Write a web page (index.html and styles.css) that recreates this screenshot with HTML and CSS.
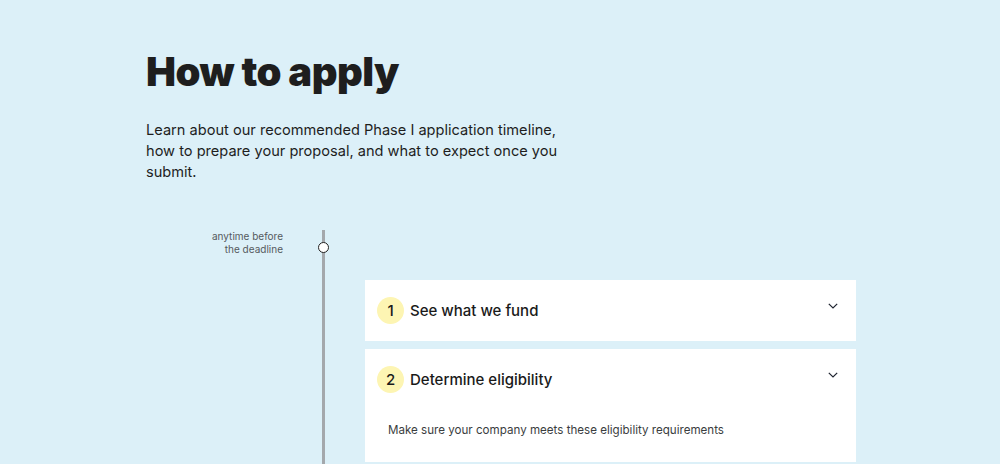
FILE: index.html
```html
<!DOCTYPE html>
<html lang="en">
<head>
<meta charset="utf-8">
<title>How to apply</title>
<link rel="stylesheet" href="styles.css">
</head>
<body>
<main class="page">
  <h1 class="title">How to apply</h1>
  <p class="intro">Learn about our recommended Phase I application timeline, how to prepare your proposal, and what to expect once you submit.</p>

  <section class="timeline">
    <div class="when">anytime before<br>the deadline</div>
    <div class="rail"><span class="dot"></span></div>
    <div class="steps">
      <div class="card">
        <div class="card-head">
          <span class="num">1</span>
          <span class="card-title">See what we fund</span>
          <svg class="chev" width="10" height="6" viewBox="0 0 10 6"><path d="M0.8 0.8l4.2 4.2L9.2 0.8" fill="none" stroke="#1f2430" stroke-width="1.2"/></svg>
        </div>
      </div>
      <div class="card">
        <div class="card-head">
          <span class="num">2</span>
          <span class="card-title">Determine eligibility</span>
          <svg class="chev" width="10" height="6" viewBox="0 0 10 6"><path d="M0.8 0.8l4.2 4.2L9.2 0.8" fill="none" stroke="#1f2430" stroke-width="1.2"/></svg>
        </div>
        <div class="card-body">Make sure your company meets these eligibility requirements</div>
      </div>
    </div>
  </section>
</main>
</body>
</html>
```

FILE: styles.css
```css
html, body {
  margin: 0;
  padding: 0;
  background: #dcf0f8;
  height: 100%;
  overflow: hidden;
}
body {
  font-family: "Inter", "Open Sans", sans-serif;
  color: #1c1c1c;
}
.page {
  padding-left: 146px;
}
.title {
  margin: 48px 0 0;
  font-size: 40px;
  line-height: 48px;
  font-weight: 900;
  letter-spacing: -0.55px;
  color: #1e1e1e;
}
.intro {
  margin: 24px 0 0;
  width: 420px;
  font-size: 14.6px;
  line-height: 21px;
  color: #1e1e1e;
}
.timeline {
  margin-top: 47px;
  display: grid;
  grid-template-columns: 137px 39px 3px 40px 491px;
  grid-template-rows: 50px auto;
}
.when {
  grid-column: 1;
  grid-row: 1;
  text-align: right;
  font-size: 10px;
  line-height: 13px;
  color: #555a5e;
}
.rail {
  grid-column: 3;
  grid-row: 1 / span 2;
  background: #a4a8ac;
  position: relative;
}
.dot {
  position: absolute;
  left: -4px;
  top: 12px;
  width: 9px;
  height: 9px;
  border: 1.5px solid #222;
  border-radius: 50%;
  background: #fff;
}
.steps {
  grid-column: 5;
  grid-row: 2;
  display: flex;
  flex-direction: column;
  gap: 8px;
  padding-bottom: 20px;
}
.card {
  background: #fff;
}
.card-head {
  height: 61px;
  display: flex;
  align-items: center;
  padding: 0 18px 0 12px;
  box-sizing: border-box;
}
.num {
  width: 27px;
  height: 27px;
  border-radius: 50%;
  background: #fdf5b3;
  display: flex;
  align-items: center;
  justify-content: center;
  font-size: 15px;
  font-weight: 500;
  color: #1a1a1a;
  flex: none;
}
.card-title {
  margin-left: 6px;
  font-size: 15px;
  font-weight: 500;
  color: #1a1a1a;
  flex: 1;
}
.chev {
  align-self: flex-start;
  margin-top: 23px;
  flex: none;
}
.card-body {
  padding: 10px 23px 22px;
  font-size: 11.6px;
  line-height: 20px;
  color: #3a3d40;
}
```
